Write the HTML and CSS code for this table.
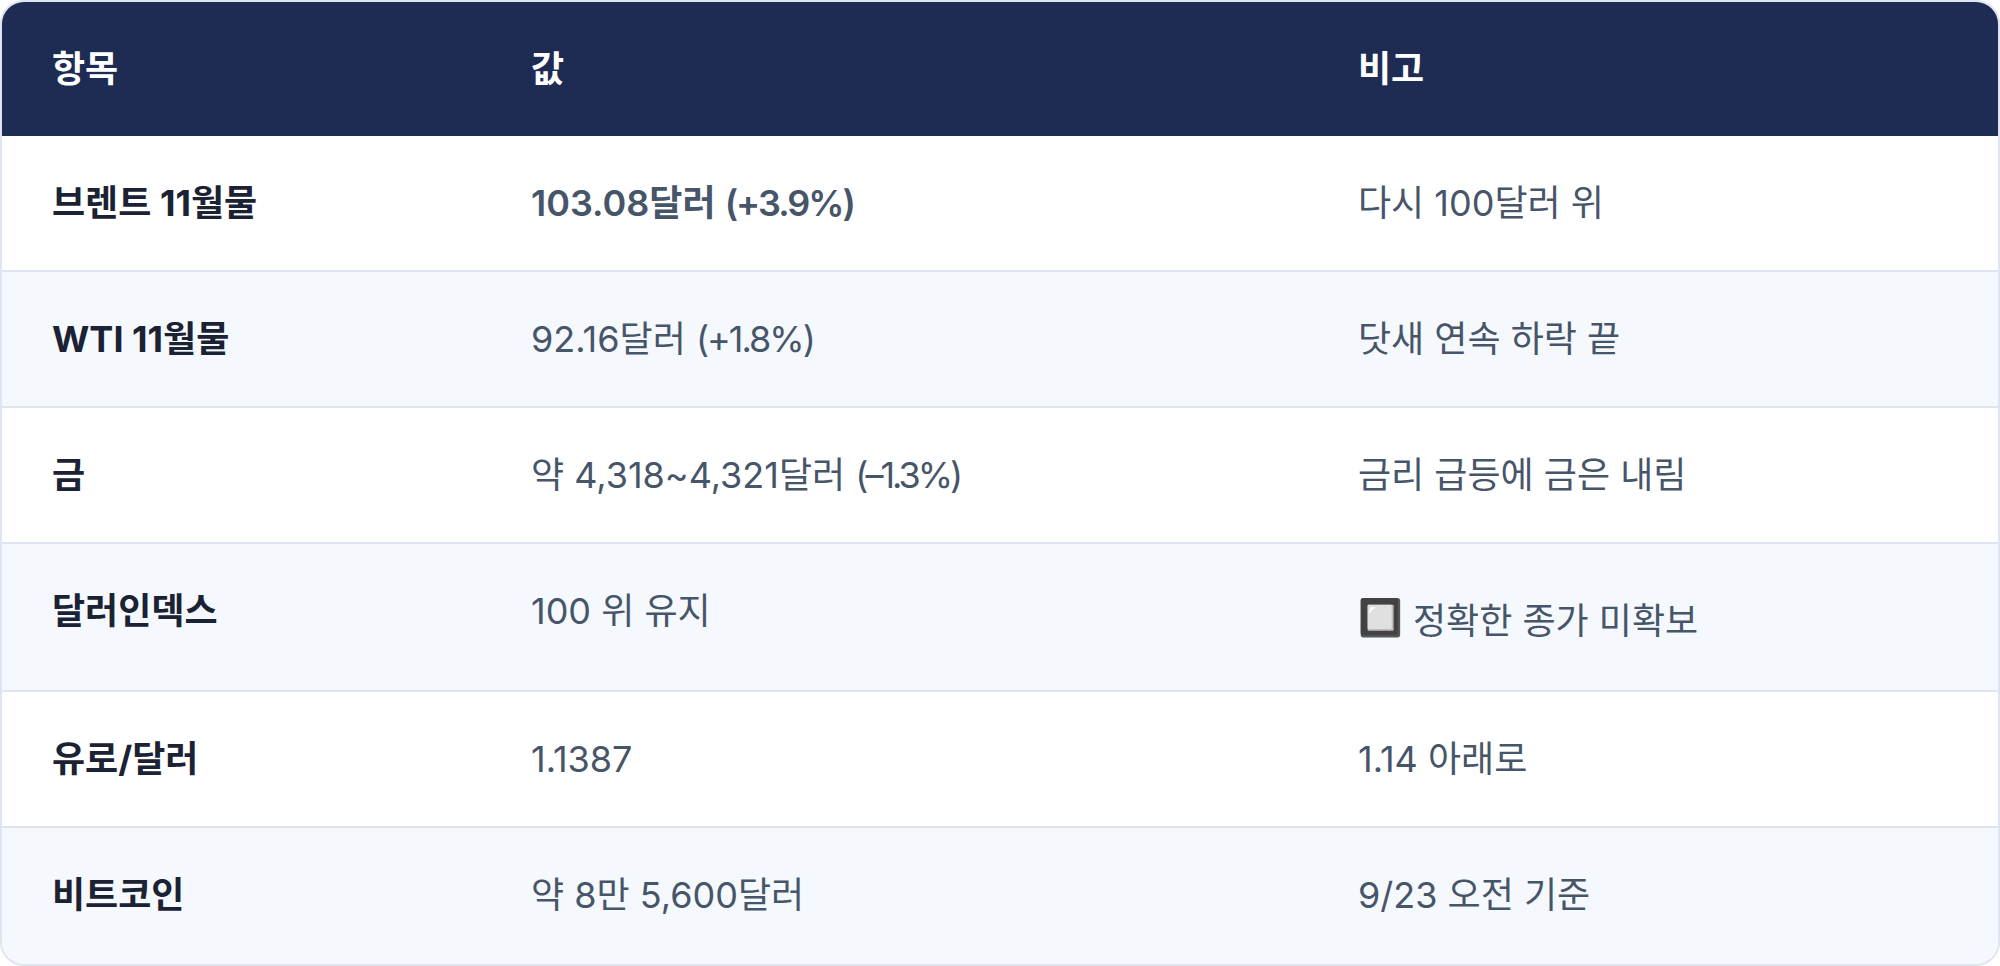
FILE: index.html
```html
<!DOCTYPE html>
<html lang="ko">
<head>
<meta charset="utf-8">
<title>시장 지표</title>
<link rel="stylesheet" href="styles.css">
</head>
<body>
<div class="table-wrap">
  <table class="market">
    <colgroup>
      <col class="col-item">
      <col class="col-value">
      <col class="col-note">
    </colgroup>
    <thead>
      <tr>
        <th>항목</th>
        <th>값</th>
        <th>비고</th>
      </tr>
    </thead>
    <tbody>
      <tr>
        <td class="name">브렌트 11월물</td>
        <td class="value strong">103.08달러 <span class="chg">(+3.9%)</span></td>
        <td class="note">다시 100달러 위</td>
      </tr>
      <tr>
        <td class="name">WTI 11월물</td>
        <td class="value">92.16달러 <span class="chg">(+1.8%)</span></td>
        <td class="note">닷새 연속 하락 끝</td>
      </tr>
      <tr>
        <td class="name">금</td>
        <td class="value">약 4,318~4,321달러 <span class="chg neg">(–1.3%)</span></td>
        <td class="note">금리 급등에 금은 내림</td>
      </tr>
      <tr>
        <td class="name">달러인덱스</td>
        <td class="value">100 위 유지</td>
        <td class="note"><span class="emoji">🔲</span> 정확한 종가 미확보</td>
      </tr>
      <tr>
        <td class="name">유로/달러</td>
        <td class="value">1.1387</td>
        <td class="note">1.14 아래로</td>
      </tr>
      <tr>
        <td class="name">비트코인</td>
        <td class="value">약 8만 5,600달러</td>
        <td class="note">9/23 오전 기준</td>
      </tr>
    </tbody>
  </table>
</div>
</body>
</html>
```
FILE: styles.css
```css
html, body {
  margin: 0;
  padding: 0;
  background: #ffffff;
}

body {
  font-family: Inter, "Noto Sans CJK KR", "Noto Color Emoji", sans-serif;
  font-size: 36px;
  line-height: 54px;
  color: #475569;
}

.table-wrap {
  border: 2px solid #dfe5f0;
  border-radius: 24px;
  overflow: hidden;
  background: #ffffff;
}

.market {
  width: 100%;
  border-collapse: collapse;
  table-layout: fixed;
}

.col-item { width: 479px; }
.col-value { width: 827px; }
.col-note { width: auto; }

.market th,
.market td {
  padding: 40px 50px;
  text-align: left;
  vertical-align: top;
}

.market thead th {
  background: #1e2b53;
  color: #ffffff;
  font-weight: 700;
}

.market tbody td {
  border-top: 2px solid #dfe5f0;
}

.market tbody tr:first-child td {
  border-top: none;
}

.market tbody tr:last-child td {
  padding-bottom: 42px;
}

.market tbody tr:nth-child(even) td {
  background: #f5f8fd;
}

.market tbody tr:nth-child(odd) td {
  background: #ffffff;
}

.name {
  color: #1a2233;
  font-weight: 700;
}

.value,
.note {
  color: #475569;
  font-weight: 400;
}

.value.strong {
  font-weight: 600;
}

.chg {
  letter-spacing: -2px;
}

.chg.neg {
  letter-spacing: -3px;
}

.emoji {
  line-height: 66px;
  vertical-align: 4px;
}
```
